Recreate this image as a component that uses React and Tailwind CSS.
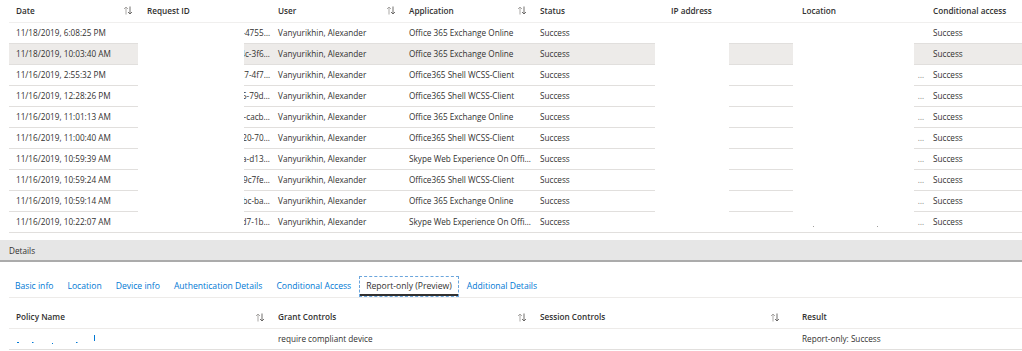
import React from "react";

const FONT = { fontFamily: '"Open Sans", "Noto Sans", sans-serif' };

function SortIcon() {
  return (
    <svg width="10" height="9" viewBox="0 0 10 9" fill="none" className="shrink-0">
      <path d="M3 8.5V1M1 3L3 1L5 3" stroke="#a19f9d" strokeWidth="0.9" />
      <path d="M7 0.5V8M5 6L7 8L9 6" stroke="#605e5c" strokeWidth="0.9" />
    </svg>
  );
}

const rows = [
  ["11/18/2019, 6:08:25 PM", "4d2c9a1e-b8f3-4755…", "Office 365 Exchange Online", false],
  ["11/18/2019, 10:03:40 AM", "9e8a1b7c-2d4c-3f6…", "Office 365 Exchange Online", false],
  ["11/16/2019, 2:55:32 PM", "6b1f3e27-a9c7-4f7…", "Office365 Shell WCSS-Client", true],
  ["11/16/2019, 12:28:26 PM", "1a7c5e25-b3f5-79d…", "Office365 Shell WCSS-Client", true],
  ["11/16/2019, 11:01:13 AM", "3f9d2b1a-e4c1-cacb…", "Office 365 Exchange Online", true],
  ["11/16/2019, 11:00:40 AM", "8c4e1f3b-9d20-70…", "Office365 Shell WCSS-Client", true],
  ["11/16/2019, 10:59:39 AM", "2b6a9f14-c7e5a-d13…", "Skype Web Experience On Offi…", true],
  ["11/16/2019, 10:59:24 AM", "5d3e8a2c-1b49c7fe…", "Office365 Shell WCSS-Client", true],
  ["11/16/2019, 10:59:14 AM", "7e2f4c9d-a3bc-ba…", "Office 365 Exchange Online", true],
  ["11/16/2019, 10:22:07 AM", "9a5b3c7f-e2d7-1b…", "Skype Web Experience On Offi…", true],
];

const cols = "grid grid-cols-[131px_131px_131px_131px_131px_131px_131px_1fr]";

export default function App() {
  return (
    <div className="w-[1022px] h-[351px] bg-white text-[#323130] text-[8.2px] overflow-hidden" style={FONT}>
      {/* main grid */}
      <div className="relative">
        <div className={`${cols} ml-[9px] h-[23px] items-center border-b border-[#f0efee] font-semibold`}>
          <div className="flex items-center justify-between pl-[7px] pr-[7px]">
            <span>Date</span>
            <SortIcon />
          </div>
          <div className="pl-[7px]">Request ID</div>
          <div className="flex items-center justify-between pl-[7px] pr-[6px]">
            <span>User</span>
            <SortIcon />
          </div>
          <div className="flex items-center justify-between pl-[7px] pr-[6px]">
            <span>Application</span>
            <SortIcon />
          </div>
          <div className="pl-[7px]">Status</div>
          <div className="pl-[7px]">IP address</div>
          <div className="pl-[7px]">Location</div>
          <div className="pl-[7px]">Conditional access</div>
        </div>
        {rows.map((r, i) => (
          <div
            key={i}
            className={`${cols} ml-[9px] h-[21px] items-center border-b border-[#e1dfdd] whitespace-nowrap ${
              i === 1 ? "bg-[#edebe9]" : ""
            }`}
          >
            <div className="pl-[7px] pt-[1px]">{r[0]}</div>
            <div className="flex justify-end overflow-hidden pr-[1px] pt-[1px]">{r[1]}</div>
            <div className="pl-[7px] pt-[1px]">Vanyurikhin, Alexander</div>
            <div className="pl-[7px] pt-[1px]">{r[2]}</div>
            <div className="pl-[7px] pt-[1px]">Success</div>
            <div></div>
            <div className="flex justify-end pr-[2px] pt-[1px] text-[#8a8886]">{r[3] ? "…" : ""}</div>
            <div className="pl-[7px] pt-[1px]">Success</div>
          </div>
        ))}
        {/* redaction overlays */}
        <div className="absolute left-[138px] top-[23px] w-[106px] h-[209px] bg-white" />
        <div className="absolute left-[655px] top-[23px] w-[74px] h-[209px] bg-white" />
        <div className="absolute left-[793px] top-[23px] w-[121px] h-[209px] bg-white" />
        <div className="absolute left-[813px] top-[226px] w-[1px] h-[1px] bg-[#a19f9d]" />
        <div className="absolute left-[877px] top-[226px] w-[1px] h-[1px] bg-[#a19f9d]" />
      </div>

      {/* details bar */}
      <div className="mt-[7px] h-[22px] bg-[#e6e6e6] border-b-2 border-[#ababab] flex items-center pl-[9px] pt-[2px]">
        Details
      </div>

      {/* tabs */}
      <div className="mt-[14px] ml-[9px] flex items-end gap-[2px] border-b border-[#edebe9] text-[8.6px]">
        {["Basic info", "Location", "Device info", "Authentication Details", "Conditional Access"].map((t) => (
          <div key={t} className="h-[21px] px-[6px] flex items-center text-[#0078d4]">
            {t}
          </div>
        ))}
        <div className="relative h-[21px] px-[6px] flex items-center border border-dashed border-[#6aa5dc] text-[#323130]">
          Report-only (Preview)
          <div className="absolute left-0 right-0 bottom-0 h-[2px] bg-[#323130]" />
        </div>
        <div className="h-[21px] px-[6px] flex items-center text-[#0078d4]">Additional Details</div>
      </div>

      {/* policy grid */}
      <div className="mt-[9px] ml-[9px] grid grid-cols-[262px_262px_262px_1fr] h-[22px] items-center border-b border-[#edebe9] font-semibold">
        <div className="flex items-center justify-between pl-[7px] pr-[6px]">
          <span>Policy Name</span>
          <SortIcon />
        </div>
        <div className="flex items-center justify-between pl-[7px] pr-[6px]">
          <span>Grant Controls</span>
          <SortIcon />
        </div>
        <div className="flex items-center justify-between pl-[7px] pr-[15px]">
          <span>Session Controls</span>
          <SortIcon />
        </div>
        <div className="pl-[7px]">Result</div>
      </div>
      <div className="ml-[9px] grid grid-cols-[262px_262px_262px_1fr] h-[21px] items-center border-b border-[#e1dfdd] whitespace-nowrap">
        <div className="pl-[7px] flex items-center">
          <svg width="90" height="12" viewBox="0 0 90 12" fill="#0078d4">
            <rect x="1" y="9" width="2" height="1" />
            <rect x="16" y="9" width="1.5" height="1" />
            <rect x="36" y="10" width="1" height="1" />
            <rect x="60" y="9" width="1.5" height="1" />
            <rect x="78" y="2" width="1" height="6" />
          </svg>
        </div>
        <div className="pl-[7px]">require compliant device</div>
        <div></div>
        <div className="pl-[7px]">Report-only: Success</div>
      </div>
    </div>
  );
}
